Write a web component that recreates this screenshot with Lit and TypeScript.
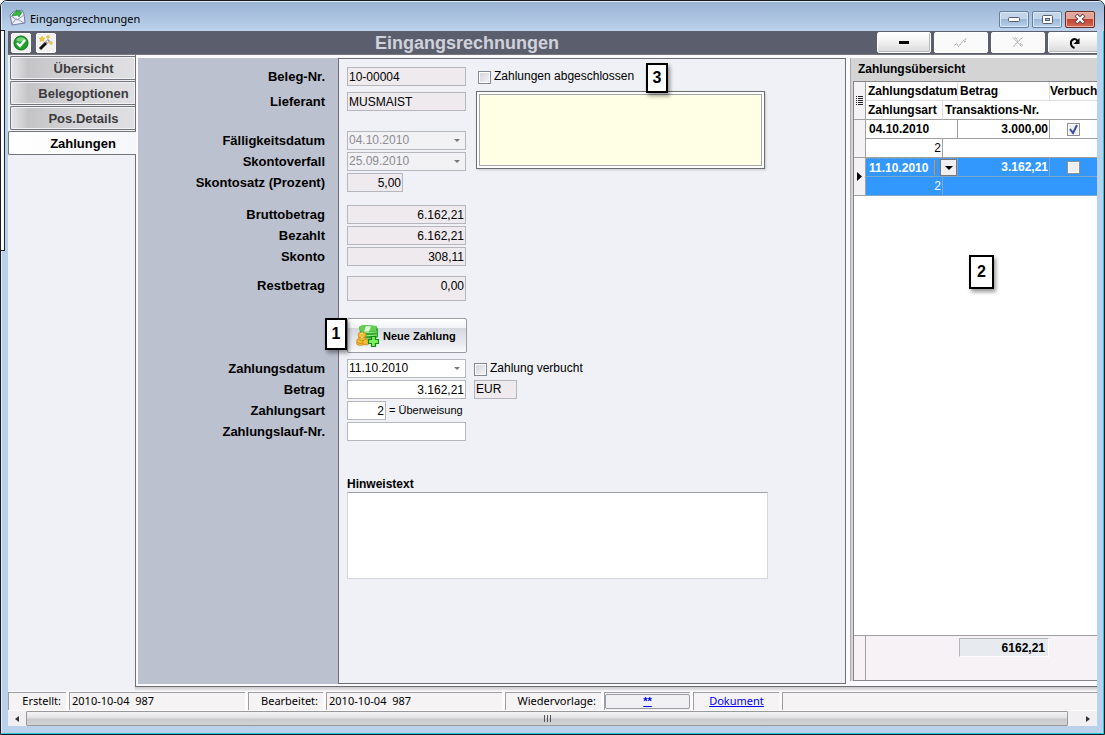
import { LitElement, html, css, nothing } from "lit";
import { customElement, property } from "lit/decorators.js";
import { classMap } from "lit/directives/class-map.js";

const arrowDown = html`<svg class="arrow" viewBox="0 0 6 3" width="6" height="3" aria-hidden="true">
  <path d="M0 0h6L3 3z" fill="currentColor" />
</svg>`;

const tick = html`<svg class="tick" viewBox="0 0 11 11" width="11" height="11" aria-hidden="true">
  <path d="M2 5l3 4 4-8" fill="none" stroke="#3c4f9c" stroke-width="2" />
</svg>`;

const mailIcon = html`<svg width="17" height="17" viewBox="0 0 17 17" aria-hidden="true">
  <path d="M1 6l3-3 9-2 2 4 1 9-13 2z" fill="#eef0fa" stroke="#7778a8" />
  <path d="M3 15l4-5 3 1 5 3M2 7l6 4 7-5" fill="none" stroke="#9496bd" />
  <path d="M3 7c1-3 3-4 5-4l-1-2 6 2-3 5-1-2c-2 0-4 1-6 1z" fill="#38b83c" stroke="#15852a" stroke-width=".6" />
</svg>`;

const okIcon = html`<svg width="16" height="16" viewBox="0 0 16 16" aria-hidden="true">
  <circle cx="8" cy="8" r="7" fill="#1fa22c" stroke="#0b6d16" />
  <path d="M3 5a6 6 0 0 1 10 0c-3 2-7 2-10 0z" fill="#74d678" />
  <path d="M4 8l3 3 5-6" fill="none" stroke="#fff" stroke-width="2.4" />
</svg>`;

const wandIcon = html`<svg width="16" height="16" viewBox="0 0 16 16" aria-hidden="true">
  <path d="M2 14l6-6" stroke="#111" stroke-width="3" />
  <path d="M8 8l3-3" stroke="#8c8c94" stroke-width="3" />
  <path d="M9 7l1-1" stroke="#fff" stroke-width="2" />
  <path d="M4 1l1 2 2 0-1.500 1.500.500 2L4 5.500 2 6.500l.500-2L1 3h2zM10 0l.700 1.500L12 2l-1.300.600L10 4l-.700-1.400L8 2l1.300-.500zM13 6l.700 1.400L15 8l-1.300.600L13 10l-.700-1.400L11 8l1.300-.600z" fill="#f2c832" stroke="#d9a514" stroke-width=".4" />
</svg>`;

const moneyIcon = html`<svg width="23" height="23" viewBox="0 0 23 23" aria-hidden="true">
  <path d="M3 3l4-2 13 1 2 3v8l-4 2-13-1z" fill="#2ea52b" />
  <path d="M3 3l4-2 14 1-1 5-15 1z" fill="#5fd04f" />
  <path d="M10 2l5 .500-2 5-5 .300z" fill="#e4f7dc" />
  <path d="M6 9l15-1M6 12l15-1" stroke="#a5ec8d" fill="none" />
  <g fill="#f3bd31" stroke="#b87912" stroke-width=".6">
    <ellipse cx="4.500" cy="19" rx="4" ry="2.500" />
    <ellipse cx="4.500" cy="17" rx="4" ry="2.500" />
    <ellipse cx="10" cy="18" rx="3.500" ry="3" />
    <ellipse cx="6" cy="14" rx="3.500" ry="2.500" />
    <ellipse cx="6" cy="11" rx="4" ry="3" />
  </g>
  <path d="M4 10l3-1M5 14l2-1" stroke="#fff3b0" />
  <path d="M15.500 12.500h4v3h3v4h-3v3h-4v-3h-3v-4h3z" fill="#7df05c" stroke="#118a1c" stroke-width="1.200" />
</svg>`;

@customElement("callout-tag")
class CalloutTag extends LitElement {
  static styles = css`
    :host {
      display: flex;
      align-items: center;
      justify-content: center;
      box-sizing: border-box;
      width: 22px;
      height: 30px;
      border: 2px solid #000;
      background: #fff;
      box-shadow: 2px 3px 4px rgba(0, 0, 0, 0.4);
      font: bold 16px "Liberation Sans", Arial, sans-serif;
      color: #000;
    }
  `;
  render() {
    return html`<slot></slot>`;
  }
}

@customElement("form-row")
class FormRow extends LitElement {
  @property() label = "";
  @property() name = "";
  @property() value = "";
  @property() kind: "text" | "date" = "text";
  @property() size: "full" | "medium" | "small" = "full";
  @property({ type: Boolean }) numeric = false;
  @property({ type: Boolean }) locked = false;
  @property({ type: Boolean }) dimmed = false;
  @property({ type: Boolean }) tall = false;

  static styles = css`
    :host {
      display: flex;
      align-items: flex-start;
      min-height: 19px;
      font: 12px/19px "Liberation Sans", Arial, sans-serif;
    }
    label {
      flex: none;
      width: 187px;
      margin-right: 22px;
      text-align: right;
      font-size: 13px;
      font-weight: bold;
    }
    .field {
      flex: none;
      display: grid;
      width: 119px;
      height: 19px;
    }
    .medium { width: 56px; }
    .small { width: 39px; }
    .tall { height: 25px; }
    .control {
      grid-area: 1 / 1;
      box-sizing: border-box;
      width: 100%;
      height: 100%;
      margin: 0;
      padding: 0 1px;
      border: 1px solid #b5b6be;
      border-radius: 0;
      background: #fff;
      color: #000;
      font: inherit;
      line-height: 17px;
      appearance: none;
      outline: none;
    }
    .tall .control { padding-bottom: 6px; }
    .locked { background: #eeeaed; }
    .dimmed { background: #f2f1f4; color: #8c8c91; opacity: 1; }
    .numeric { text-align: right; padding-right: 1px; }
    .arrow {
      grid-area: 1 / 1;
      place-self: center end;
      margin-right: 6px;
      color: #77777c;
      pointer-events: none;
    }
  `;

  render() {
    const cls = classMap({ control: true, locked: this.locked, dimmed: this.dimmed, numeric: this.numeric });
    return html`
      <label for=${this.name}>${this.label}</label>
      <div class=${classMap({ field: true, [this.size]: true, tall: this.tall })}>
        ${this.kind === "date"
          ? html`<select id=${this.name} class=${cls} ?disabled=${this.dimmed}>
                <option>${this.value}</option></select
              >${arrowDown}`
          : html`<input id=${this.name} class=${cls} .value=${this.value} ?readonly=${this.locked} />`}
      </div>
      <slot></slot>
    `;
  }
}

interface Payment {
  date: string;
  amount: string;
  kind: string;
  booked: boolean;
  current: boolean;
}

@customElement("payment-grid")
class PaymentGrid extends LitElement {
  @property({ attribute: false }) payments: Payment[] = [];

  static styles = css`
    :host {
      display: flex;
      flex-direction: column;
      box-sizing: border-box;
      position: relative;
      overflow: hidden;
      background: #d4d4d5;
      border-left: 1px solid #a9a9ae;
      font: bold 12px/18px "Liberation Sans", Arial, sans-serif;
    }
    h2 {
      margin: 0;
      padding: 0 7px;
      font-size: 12px;
      line-height: 23px;
    }
    .sheet {
      flex: 1;
      display: flex;
      flex-direction: column;
      margin-left: 2px;
      border: 1px solid #85858a;
      border-right: 0;
      background: #fff;
    }
    table {
      width: 100%;
      table-layout: fixed;
      border-collapse: separate;
      border-spacing: 0;
    }
    .c-mark { width: 12px; }
    .c-kind { width: 77px; }
    .c-rest { width: 15px; }
    .c-amount { width: 92px; }
    th, td {
      height: 18px;
      padding: 0 1px 0 3px;
      border-right: 1px solid #a0a0a0;
      border-bottom: 1px solid #a0a0a0;
      text-align: left;
      white-space: nowrap;
      overflow: hidden;
      font-weight: bold;
    }
    th {
      padding: 0 0 0 2px;
      border-color: #dedede;
    }
    .lower th { border-bottom-color: #a0a0a0; }
    .mark {
      padding: 0;
      background: #f5f2f5;
      border-color: #a0a0a0;
      text-align: center;
      line-height: 0;
    }
    .edge { border-right: 0; }
    .short { padding-left: 0; }
    .num { text-align: right; }
    .kind { font-weight: normal; }
    .tickcell { padding: 0; text-align: center; line-height: 0; }
    .current td:not(.mark) {
      background: #3398fe;
      color: #fff;
      border-color: #7aa6cf;
    }
    .current .editing {
      padding: 0;
      background: #f3f2f4;
      border-top: 1px dotted #222;
      height: 17px;
    }
    .editor { display: flex; align-items: center; height: 17px; justify-content: space-between; }
    .editor input {
      box-sizing: border-box;
      width: 68px;
      height: 15px;
      margin: 0 0 0 1px;
      padding: 0 2px;
      border: 0;
      border-right: 1px solid #f08a24;
      background: #3398fe;
      color: #fff;
      font: inherit;
    }
    .editor button {
      width: 17px;
      height: 17px;
      padding: 0;
      display: grid;
      place-items: center;
      border: 1px solid #777;
      background: #f1f0f1;
      color: #000;
    }
    .box {
      display: inline-grid;
      width: 13px;
      height: 13px;
    }
    .box > * { grid-area: 1 / 1; }
    .box input {
      appearance: none;
      box-sizing: border-box;
      width: 13px;
      height: 13px;
      margin: 0;
      border: 1px solid #8d8f96;
      background: #efeff2;
      box-shadow: inset 0 0 0 1px #fff;
    }
    .tick { place-self: center; pointer-events: none; }
    .rows { flex: 1; }
    .total {
      display: flex;
      height: 44px;
      border-top: 1px solid #a0a0a0;
      background: #f6f2f5;
    }
    .stub { flex: none; width: 11px; border-right: 1px solid #a0a0a0; }
    output {
      box-sizing: border-box;
      width: 90px;
      height: 19px;
      margin: 2px 0 0 93px;
      padding-right: 3px;
      border: 1px solid #b5b6bb;
      border-right-color: #fff;
      border-bottom-color: #fff;
      background: #e7eaee;
      text-align: right;
    }
    .pin {
      position: absolute;
      left: 118px;
      top: 197px;
      width: 25px;
      height: 34px;
    }
  `;

  private record(p: Payment) {
    return html`
      <tr class=${classMap({ current: p.current })}>
        <td class="mark" rowspan="2">
          ${p.current
            ? html`<svg width="5" height="9" viewBox="0 0 5 9" aria-hidden="true"><path d="M0 0l5 4.500L0 9z" /></svg>`
            : nothing}
        </td>
        ${p.current
          ? html`<td class="editing" colspan="2">
              <div class="editor">
                <input aria-label="Zahlungsdatum" .value=${p.date} />
                <button aria-label="Datum">
                  <svg width="8" height="4" viewBox="0 0 8 4"><path d="M0 0h8L4 4z" /></svg>
                </button>
              </div>
            </td>`
          : html`<td colspan="2">${p.date}</td>`}
        <td class="num">${p.amount}</td>
        <td class="edge tickcell">
          <span class="box"
            ><input type="checkbox" aria-label="Verbucht" .checked=${p.booked} />${p.booked ? tick : nothing}</span
          >
        </td>
      </tr>
      <tr class=${classMap({ current: p.current })}>
        <td class="num kind">${p.kind}</td>
        <td class="edge" colspan="3"></td>
      </tr>
    `;
  }

  render() {
    return html`
      <h2>Zahlungsübersicht</h2>
      <div class="sheet">
        <div class="rows">
          <table>
            <colgroup>
              <col class="c-mark" /><col class="c-kind" /><col class="c-rest" /><col class="c-amount" /><col />
            </colgroup>
            <thead>
              <tr>
                <th class="mark" rowspan="2">
                  <svg width="7" height="9" viewBox="0 0 7 9" aria-hidden="true">
                    <path d="M0 .5h1M2 .5h5M0 2.500h1M2 2.500h5M0 4.500h1M2 4.500h5M0 6.500h1M2 6.500h5M0 8.500h1M2 8.500h5" stroke="#222" />
                  </svg>
                </th>
                <th colspan="2">Zahlungsdatum</th>
                <th>Betrag</th>
                <th class="edge short">Verbuch</th>
              </tr>
              <tr class="lower">
                <th>Zahlungsart</th>
                <th class="edge" colspan="3">Transaktions-Nr.</th>
              </tr>
            </thead>
            <tbody>
              ${this.payments.map((p) => this.record(p))}
            </tbody>
          </table>
        </div>
        <div class="total"><div class="stub"></div><output>6162,21</output></div>
      </div>
      <callout-tag class="pin">2</callout-tag>
    `;
  }
}

@customElement("app-root")
class AppRoot extends LitElement {
  private tabs = ["Übersicht", "Belegoptionen", "Pos.Details", "Zahlungen"];
  private payments: Payment[] = [
    { date: "04.10.2010", amount: "3.000,00", kind: "2", booked: true, current: false },
    { date: "11.10.2010", amount: "3.162,21", kind: "2", booked: false, current: true },
  ];

  static styles = css`
    :host {
      display: block;
      background: #fff;
      color: #000;
      font: 12px/19px "Liberation Sans", Arial, sans-serif;
    }
    .window {
      position: relative;
      display: flex;
      flex-direction: column;
      box-sizing: border-box;
      min-height: 100vh;
      padding: 0 7px 8px;
      border: 1px solid #1c1c20;
      border-radius: 7px 7px 0 0;
      background: #bad1ec;
      box-shadow: inset -1px -1px 0 #2cc3dd, inset 1px 1px 0 #dfeaf6;
      overflow: hidden;
    }
    .behind {
      position: absolute;
      left: -1px;
      top: 29px;
      width: 4px;
      height: 219px;
      border: 1px solid #222;
      border-left: 0;
      background: #fafafc;
    }
    .titlebar {
      display: flex;
      align-items: center;
      gap: 4px;
      height: 30px;
      margin: 0 -7px;
      padding: 0 9px 0 8px;
      background: linear-gradient(#98b2d2, #bcd2ec);
      box-shadow: inset 1px 1px 0 #dfeaf6;
      font: 12px/20px "Noto Sans", "Open Sans", sans-serif;
    }
    .titlebar > svg { margin-top: 2px; }
    .caption { flex: 1; padding-top: 5px; font-size: 11px; }
    .winbtns { display: flex; gap: 3px; padding-top: 6px; }
    .winbtn {
      box-sizing: border-box;
      width: 30px;
      height: 17px;
      padding: 0;
      display: grid;
      place-items: center;
      border: 1px solid #65809f;
      border-radius: 2px;
      background: linear-gradient(#c3d5ea 50%, #9db8d6 50%, #b8d0ea);
      box-shadow: inset 0 0 0 1px #dce8f5;
    }
    .close {
      border-color: #6d2b26;
      background: linear-gradient(#e3a597 45%, #c14430 50%, #d46a52);
      box-shadow: inset 0 0 0 1px #eab5a8;
    }
    .toolbar {
      display: flex;
      align-items: center;
      box-sizing: border-box;
      height: 24px;
      border-bottom: 1px solid #77777e;
      background: #5b5e6c;
      overflow: hidden;
    }
    .tools { display: flex; gap: 5px; padding-left: 3px; }
    .tool {
      width: 20px;
      height: 20px;
      padding: 0;
      display: grid;
      place-items: center;
      border: 1px solid #fff;
      border-radius: 2px;
      background: #f1f1f2;
    }
    h1 {
      flex: 1;
      margin: 0;
      padding-left: 319px;
      color: #d0d2db;
      font-size: 18px;
      line-height: 22px;
    }
    .actions { display: flex; gap: 3px; margin-right: -5px; }
    .action {
      width: 54px;
      height: 21px;
      padding: 0;
      display: grid;
      place-items: center;
      border: 1px solid #fff;
      border-radius: 2px;
      background: linear-gradient(#fff, #f0f0f1 50%, #d9d9db);
      box-shadow: inset -1px -1px 0 #b9b9be;
    }
    .action:disabled { background: #fbfafb; box-shadow: none; }
    .main {
      flex: 1;
      display: flex;
      padding-bottom: 4px;
      background: linear-gradient(#c6c7ca, #f4f2f5) bottom / 100% 4px no-repeat, #eff1f6;
    }
    nav {
      flex: none;
      display: flex;
      flex-direction: column;
      gap: 1px;
      width: 127px;
      padding-top: 1px;
      margin-bottom: -4px;
      background: #eff1f6;
    }
    .tab {
      box-sizing: border-box;
      height: 24px;
      margin: 0 0 0 2px;
      padding: 1px 3px 0 24px;
      border: 1px solid #74757b;
      border-right: 0;
      border-radius: 2px 0 0 2px;
      background: linear-gradient(90deg, #e6e6e8, #c4c4c6 14%, #d8d8da 60%, #e0e0e2);
      box-shadow: inset 0 0 0 1px #f1f1f3;
      color: #3c3c40;
      font: bold 13px/20px "Liberation Sans", Arial, sans-serif;
      text-align: center;
    }
    .active {
      position: relative;
      margin: 0 -1px 0 0;
      background: linear-gradient(90deg, #fff, #f6f7fa);
      box-shadow: none;
      color: #000;
    }
    .workspace {
      flex: 1;
      min-width: 0;
      display: flex;
      gap: 4px;
      padding: 3px 0 2px 2px;
      border-left: 1px solid #6e6e74;
      border-bottom: 1px solid #6e6e74;
      background: #fbfafc;
    }
    .panel {
      flex: 1;
      min-width: 0;
      position: relative;
      z-index: 0;
      padding-top: 9px;
      background: #bcc1cf;
    }
    .panel::before {
      content: "";
      position: absolute;
      inset: 0 0 0 200px;
      z-index: -1;
      border: 1px solid #6e6c76;
      background: #eff1f6;
    }
    payment-grid { flex: none; width: 247px; margin-bottom: 3px; }
    .top { display: flex; gap: 11px; }
    .rows, .group { display: flex; flex-direction: column; }
    .group { gap: 2px; }
    .loose { gap: 6px; }
    .due { margin-top: 20px; }
    .sums { margin-top: 13px; }
    .rest { margin-top: 10px; }
    .extras { flex: 1; margin-right: 80px; }
    .done { display: flex; align-items: center; height: 19px; position: relative; }
    .check { display: flex; align-items: center; gap: 3px; white-space: nowrap; }
    .check input {
      appearance: none;
      box-sizing: border-box;
      width: 13px;
      height: 13px;
      margin: 1px 0 0;
      border: 1px solid #85878e;
      background: linear-gradient(135deg, #d0d3da, #f6f6f8);
      box-shadow: inset 0 0 0 1px #fff;
    }
    .inset { margin-left: 1px; }
    .three { position: absolute; left: 169px; top: -4px; }
    .memo {
      display: block;
      box-sizing: border-box;
      width: 100%;
      height: 78px;
      margin: 5px 0 0 -1px;
      padding: 3px;
      border: 1px solid #6c6d72;
      background: #ffffe5;
      box-shadow: inset 0 0 0 2px #fff, inset 0 0 0 3px #a5a6ad, 1px 1px 2px #c9c9ce;
      resize: none;
    }
    .create { position: relative; margin: 17px 0 6px 209px; width: 120px; }
    .new {
      display: flex;
      align-items: center;
      gap: 4px;
      box-sizing: border-box;
      width: 120px;
      height: 35px;
      padding: 0 8px;
      border: 1px solid #9a9ca5;
      border-radius: 2px;
      background: linear-gradient(#fff 0, #f3f4f6 27%, #d5d9df 28%, #e9ebef 75%, #fafafa);
      color: #000;
      font: bold 11px/14px "Liberation Sans", Arial, sans-serif;
      white-space: nowrap;
    }
    .one { position: absolute; left: -22px; top: 0; z-index: 1; height: 32px; }
    .after { margin-left: 8px; }
    .hint { margin-left: 3px; font-size: 11px; }
    .eur {
      box-sizing: border-box;
      width: 43px;
      height: 19px;
      margin-left: 8px;
      padding: 0 1px;
      border: 1px solid #b5b6be;
      background: #eeeaed;
      font: inherit;
    }
    .note { margin: 34px 78px 0 209px; }
    .note label {
      display: block;
      padding-top: 1px;
      font-size: 12px;
      font-weight: bold;
      line-height: 16px;
    }
    .note textarea {
      display: block;
      box-sizing: border-box;
      width: 100%;
      height: 87px;
      border: 1px solid #d5d5da;
      border-top-color: #9fa0a6;
      background: #fff;
      resize: none;
    }
    .status {
      display: flex;
      gap: 3px;
      height: 20px;
      background: #fdfcfd;
      font: 11px/16px "Noto Sans", "Open Sans", sans-serif;
    }
    .cell {
      box-sizing: border-box;
      height: 18px;
      margin-top: 1px;
      border-top: 1px solid #9d9da2;
      border-left: 1px solid #9d9da2;
      background: #f6f3f5;
      white-space: pre;
    }
    .name { text-align: right; padding-right: 5px; }
    .w58 { width: 58px; }
    .w75 { width: 75px; }
    .w86 { width: 86px; text-align: center; }
    .w96 { width: 96px; }
    .w176 { width: 176px; padding-left: 2px; }
    .fill { flex: 1; }
    a { color: #0000f0; }
    .mini {
      box-sizing: border-box;
      width: 85px;
      height: 15px;
      margin: 1px 0 0;
      padding: 0;
      display: block;
      border: 1px solid #9a9ba2;
      border-radius: 2px;
      background: #f1f0f3;
      color: #0000f0;
      font: bold 11px/13px "Liberation Sans", Arial, sans-serif;
      text-decoration: underline;
    }
    .scroll {
      display: flex;
      height: 15px;
      background: #f1eff1;
    }
    .step {
      width: 18px;
      padding: 0;
      display: grid;
      place-items: center;
      border: 0;
      background: none;
    }
    .end { width: 29px; padding-left: 10px; }
    .thumb {
      flex: 1;
      display: grid;
      place-items: center;
      border: 1px solid #98989d;
      border-radius: 1px;
      background: linear-gradient(#f4f3f4, #e2e1e3 45%, #c9c8cb 55%, #d3d2d5);
    }
  `;

  render() {
    return html`
      <div class="window">
        <header class="titlebar">
          ${mailIcon}
          <span class="caption">Eingangsrechnungen</span>
          <div class="winbtns">
            <button class="winbtn" aria-label="Minimieren">
              <svg width="12" height="6" viewBox="0 0 12 6"><rect x=".5" y="1.500" width="11" height="4" rx="1" fill="#fff" stroke="#555c6a" /></svg>
            </button>
            <button class="winbtn" aria-label="Maximieren">
              <svg width="11" height="9" viewBox="0 0 11 9">
                <rect x=".5" y=".5" width="10" height="8" rx="1" fill="#fff" stroke="#555c6a" />
                <rect x="3.500" y="3.500" width="4" height="2" fill="#a9c0da" stroke="#555c6a" />
              </svg>
            </button>
            <button class="winbtn close" aria-label="Schließen">
              <svg width="12" height="10" viewBox="0 0 12 10">
                <path d="M2 1l8 8M10 1L2 9" stroke="#5d3c43" stroke-width="4" />
                <path d="M2.500 1.500l7 7M9.500 1.500l-7 7" stroke="#fff" stroke-width="2.400" />
              </svg>
            </button>
          </div>
        </header>
        <div class="toolbar">
          <div class="tools">
            <button class="tool" aria-label="Speichern">${okIcon}</button>
            <button class="tool" aria-label="Assistent">${wandIcon}</button>
          </div>
          <h1>Eingangsrechnungen</h1>
          <div class="actions">
            <button class="action" aria-label="Löschen">
              <svg width="10" height="3" viewBox="0 0 10 3"><rect width="10" height="3" /></svg>
            </button>
            <button class="action" aria-label="Übernehmen" disabled>
              <svg width="14" height="10" viewBox="0 0 14 10" fill="none" stroke="#98989c"><path d="M.5 7.500l2-2 2 3 5-6 3-2M10 4l2-1" stroke-dasharray="2 .6" /></svg>
            </button>
            <button class="action" aria-label="Verwerfen" disabled>
              <svg width="12" height="11" viewBox="0 0 12 11" fill="none" stroke="#98989c"><path d="M1 .5l9 9.500M10.500.5L5 5.500 1 10M3.500.5l2 3M8 6.500l3 2" stroke-dasharray="2 .6" /></svg>
            </button>
            <button class="action" aria-label="Aktualisieren">
              <svg width="12" height="12" viewBox="0 0 12 12"><path d="M5.500 11C1 9.500 1 4 4 2.500 6 1.500 8 2.500 9 4.500" fill="none" stroke="#000" stroke-width="2" /><path d="M10.500 1v6h-6z" /></svg>
            </button>
          </div>
        </div>
        <div class="main">
          <nav>
            ${this.tabs.map((t) => html`<button class=${classMap({ tab: true, active: t === "Zahlungen" })}>${t}</button>`)}
          </nav>
          <div class="workspace">
            <section class="panel">
              <div class="top">
                <div class="rows">
                  <div class="group loose">
                    <form-row label="Beleg-Nr." name="beleg" value="10-00004" locked></form-row>
                    <form-row label="Lieferant" name="lieferant" value="MUSMAIST" locked></form-row>
                  </div>
                  <div class="group due">
                    <form-row label="Fälligkeitsdatum" name="faellig" kind="date" value="04.10.2010" dimmed></form-row>
                    <form-row label="Skontoverfall" name="verfall" kind="date" value="25.09.2010" dimmed></form-row>
                    <form-row label="Skontosatz (Prozent)" name="satz" value="5,00" size="medium" numeric locked></form-row>
                  </div>
                  <div class="group sums">
                    <form-row label="Bruttobetrag" name="brutto" value="6.162,21" numeric locked></form-row>
                    <form-row label="Bezahlt" name="bezahlt" value="6.162,21" numeric locked></form-row>
                    <form-row label="Skonto" name="skonto" value="308,11" numeric locked></form-row>
                  </div>
                  <form-row class="rest" label="Restbetrag" name="rest" value="0,00" numeric locked tall></form-row>
                </div>
                <div class="extras">
                  <div class="done">
                    <label class="check inset"><input type="checkbox" />Zahlungen abgeschlossen</label>
                    <callout-tag class="three">3</callout-tag>
                  </div>
                  <textarea class="memo" aria-label="Bemerkung" readonly></textarea>
                </div>
              </div>
              <div class="create">
                <callout-tag class="one">1</callout-tag>
                <button class="new">${moneyIcon}Neue Zahlung</button>
              </div>
              <div class="group">
                <form-row label="Zahlungsdatum" name="datum" kind="date" value="11.10.2010">
                  <label class="check after"><input type="checkbox" />Zahlung verbucht</label>
                </form-row>
                <form-row label="Betrag" name="betrag" value="3.162,21" numeric>
                  <input class="eur" aria-label="Währung" value="EUR" readonly />
                </form-row>
                <form-row label="Zahlungsart" name="art" value="2" size="small" numeric>
                  <span class="hint">= Überweisung</span>
                </form-row>
                <form-row label="Zahlungslauf-Nr." name="lauf"></form-row>
              </div>
              <div class="note">
                <label for="hinweis">Hinweistext</label>
                <textarea id="hinweis"></textarea>
              </div>
            </section>
            <payment-grid .payments=${this.payments}></payment-grid>
          </div>
        </div>
        <footer class="status">
          <span class="cell name w58">Erstellt:</span>
          <span class="cell w176">2010-10-04  987</span>
          <span class="cell name w75">Bearbeitet:</span>
          <span class="cell w176">2010-10-04  987</span>
          <span class="cell name w96">Wiedervorlage:</span>
          <span class="cell w86"><button class="mini">**</button></span>
          <span class="cell w86"><a href="#dokument">Dokument</a></span>
          <span class="cell fill"></span>
        </footer>
        <div class="scroll">
          <button class="step" aria-label="Nach links">
            <svg width="4" height="6" viewBox="0 0 4 6"><path d="M4 0v6L0 3z" fill="#333" /></svg>
          </button>
          <div class="thumb">
            <svg width="9" height="7" viewBox="0 0 9 7"><path d="M1.500 0v7M4.500 0v7M7.500 0v7" stroke="#55555a" /></svg>
          </div>
          <button class="step end" aria-label="Nach rechts">
            <svg width="4" height="6" viewBox="0 0 4 6"><path d="M0 0v6l4-3z" fill="#333" /></svg>
          </button>
        </div>
        <div class="behind"></div>
      </div>
    `;
  }
}
